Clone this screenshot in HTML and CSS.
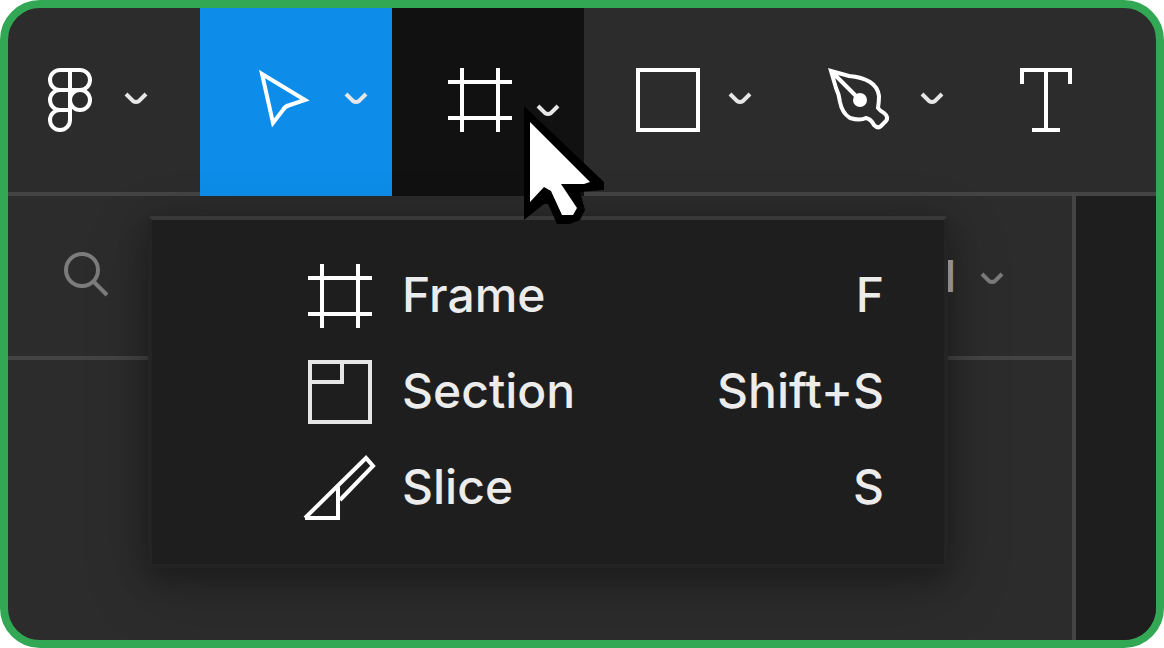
FILE: index.html
```html
<!DOCTYPE html>
<html lang="en">
<head>
	<meta charset="utf-8">
	<meta name="viewport" content="width=device-width, initial-scale=1">
	<title>Frame tools</title>
	<link rel="stylesheet" href="styles.css">
</head>
<body>
	<div class="window">
		<div class="toolbar">
			<button class="tool tool-main" aria-label="Main menu">
				<svg class="icon" viewBox="0 0 80 80">
					<path d="M32 10h20a10 10 0 0 1 0 20H32a10 10 0 0 1 0-20zM32 30a10 10 0 0 0 0 20h10M42 10v50a10 10 0 1 1-10-10"/>
					<circle cx="52" cy="40" r="10"/>
				</svg>
				<svg class="chevron" viewBox="0 0 32 24"><path d="M6 6l7 7q3 2 6 0l7-7"/></svg>
			</button>
			<button class="tool active" aria-label="Move">
				<svg class="icon" viewBox="0 0 80 80"><path d="M14 14L57 40L42 45Q37 46 35 50L25 63Z"/></svg>
				<svg class="chevron" viewBox="0 0 32 24"><path d="M6 6l7 7q3 2 6 0l7-7"/></svg>
			</button>
			<button class="tool open" aria-label="Frame tools">
				<svg class="icon" viewBox="0 0 80 80"><path d="M22 8v64M58 8v64M8 22h64M8 58h64"/></svg>
				<svg class="chevron" viewBox="0 0 32 24"><path d="M6 6l7 7q3 2 6 0l7-7"/></svg>
			</button>
			<button class="tool" aria-label="Rectangle">
				<svg class="icon" viewBox="0 0 80 80"><rect x="6" y="10" width="60" height="60"/></svg>
				<svg class="chevron" viewBox="0 0 32 24"><path d="M6 6l7 7q3 2 6 0l7-7"/></svg>
			</button>
			<button class="tool" aria-label="Pen">
				<svg class="icon" viewBox="0 0 80 80">
					<path d="M7 11L25 16Q38 17 46 22Q54 27 55 36Q55 42 54 48Q56 51 60 53Q65 57 62 61L57 66Q54 69 50 65Q47 59 42 58Q36 61 26 58Q18 53 16 42Q15 34 12 28ZM7 11L36 40"/>
					<circle class="fill" cx="36" cy="40" r="7"/>
				</svg>
				<svg class="chevron" viewBox="0 0 32 24"><path d="M6 6l7 7q3 2 6 0l7-7"/></svg>
			</button>
			<button class="tool tool-last" aria-label="Text">
				<svg class="icon" viewBox="0 0 80 80"><path d="M6 24V10h48v14M30 10v60M16 70h28"/></svg>
			</button>
		</div>

		<div class="content">
			<div class="sidebar">
				<div class="sidebar-head">
					<button class="search" aria-label="Search">
						<svg viewBox="0 0 56 56"><circle cx="22" cy="22" r="16"/><path d="M33 33l14 14"/></svg>
					</button>
					<button class="page">
						1
						<svg class="chevron" viewBox="0 0 32 24"><path d="M6 6l7 7q3 2 6 0l7-7"/></svg>
					</button>
				</div>
			</div>
			<div class="canvas"></div>
		</div>

		<div class="menu">
			<button class="item">
				<svg class="icon" viewBox="0 0 80 80"><path d="M22 8v64M58 8v64M8 22h64M8 58h64"/></svg>
				<span class="name">Frame</span>
				<span>F</span>
			</button>
			<button class="item">
				<svg class="icon soft" viewBox="0 0 80 80"><path d="M10 10h60v60h-60zM42 10v20H10"/></svg>
				<span class="name">Section</span>
				<span>Shift+S</span>
			</button>
			<button class="item">
				<svg class="icon" viewBox="0 0 80 80"><path d="M5 70L66 10L73 18L40 52M38 38V70H5"/></svg>
				<span class="name">Slice</span>
				<span>S</span>
			</button>
		</div>

		<svg class="cursor" viewBox="0 0 84 120">
			<path class="edge" d="M0 0L80 76V84L56 86L61 104L56 114L46 118H33L24 98H20L0 114Z"/>
			<path class="body" d="M6 16L66 76L60 78H37L53 102L49 109H38L27 85L20 81L6 96Z"/>
		</svg>
	</div>
</body>
</html>
```
FILE: styles.css
```css
* {box-sizing: border-box;}
body{
	margin: 0;
	background-color: #fff;
	font-family: Inter, "Liberation Sans", sans-serif;
}
button{
	display: flex;
	align-items: center;
	margin: 0;
	padding: 0;
	border: 0;
	background: none;
	color: inherit;
	font: inherit;
	text-align: left;
}
svg{
	display: block;
	flex: none;
	fill: none;
	stroke: #fff;
	stroke-width: 4px;
}
.window{
	position: relative;
	display: flex;
	flex-direction: column;
	min-height: 100vh;
	border: 8px solid #33a854;
	border-radius: 40px;
	background-color: #2c2c2c;
	overflow: hidden;
}

/* toolbar */
.toolbar{display: flex;}
.tool{
	flex: none;
	gap: 12px;
	width: 192px;
	height: 188px;
	padding-left: 48px;
	border-bottom: 4px solid #444;
}
.tool-main{padding-left: 20px;}
.tool-last{flex: 1;}
.active{
	background-color: #0d8de9;
	border-color: #0d8de9;
}
.open{
	background-color: #111;
	border-color: #111;
}
.open .chevron{margin-top: 24px;}
.icon{
	width: 80px;
	height: 80px;
}
.icon .fill{
	fill: #fff;
	stroke: none;
}
.soft{stroke: #e6e6e6;}
.chevron{
	width: 32px;
	height: 24px;
	stroke: #e6e6e6;
}

/* panels under the toolbar */
.content{
	display: flex;
	flex: 1;
}
.sidebar{
	flex: 1;
	border-right: 4px solid #444;
}
.sidebar-head{
	display: flex;
	align-items: center;
	justify-content: space-between;
	height: 164px;
	padding: 0 64px 0 52px;
	border-bottom: 4px solid #444;
}
.search svg{
	width: 56px;
	height: 56px;
	stroke: #7c7c7c;
}
.page{
	gap: 20px;
	color: #b3b3b3;
	font-size: 44px;
	font-weight: 600;
	line-height: 48px;
}
.page .chevron{
	margin-top: 8px;
	stroke: #7c7c7c;
}
.canvas{
	width: 80px;
	background-color: #1e1e1e;
}

/* dropdown */
.menu{
	position: absolute;
	left: 140px;
	top: 208px;
	width: 800px;
	padding: 28px 0;
	border: 4px solid #242424;
	border-top-color: #383838;
	border-radius: 4px;
	background-color: #1e1e1e;
	box-shadow: 0 20px 68px rgba(0,0,0,.2), 0 8px 28px rgba(0,0,0,.3);
}
.item{
	gap: 22px;
	width: 100%;
	height: 96px;
	padding: 0 60px 2px 148px;
	color: #ececec;
	font-size: 48px;
	font-weight: 500;
	line-height: 56px;
}
.item .icon{margin-top: 2px;}
.name{flex: 1;}

.cursor{
	position: absolute;
	left: 516px;
	top: 98px;
	width: 84px;
	height: 120px;
	stroke: none;
}
.edge{fill: #000;}
.body{fill: #fff;}
```
